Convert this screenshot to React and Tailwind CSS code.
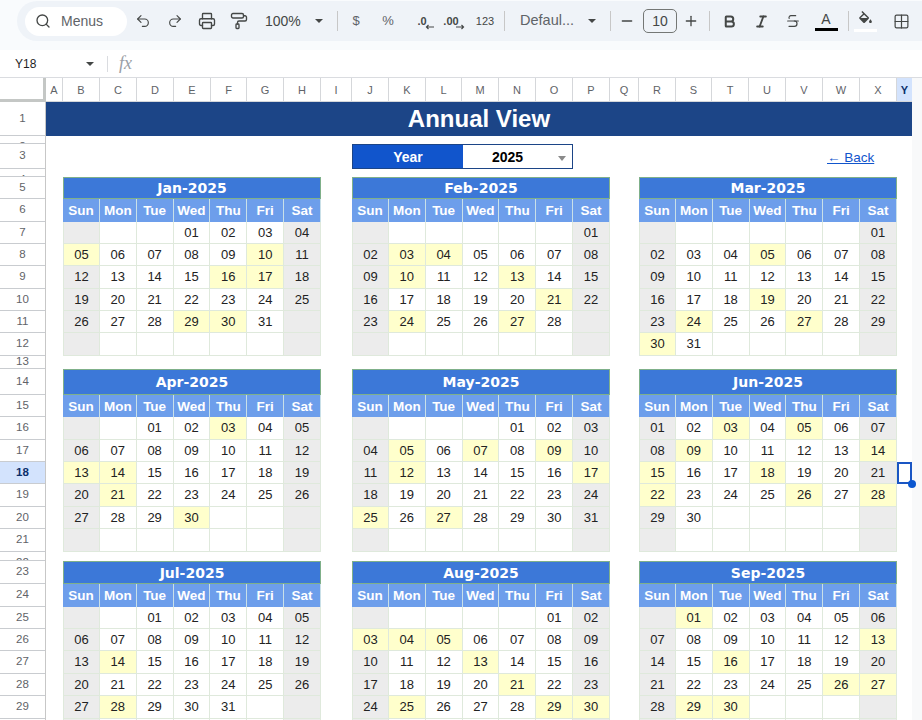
import React from "react";
import { Search, Undo2, Redo2, Printer, PaintRoller, Minus, Plus, Bold, Italic, Strikethrough, Grid2x2 } from "lucide-react";

/* --- data --- */
const COLS = [
  ["A", "w-[17px]"], ["B", "w-[37px]"], ["C", "w-[37px]"], ["D", "w-[37px]"], ["E", "w-[37px]"], ["F", "w-[36px]"],
  ["G", "w-[37px]"], ["H", "w-[37px]"], ["I", "w-[31px]"], ["J", "w-[37px]"], ["K", "w-[37px]"], ["L", "w-[36px]"],
  ["M", "w-[37px]"], ["N", "w-[37px]"], ["O", "w-[37px]"], ["P", "w-[37px]"], ["Q", "w-[29px]"], ["R", "w-[37px]"],
  ["S", "w-[36px]"], ["T", "w-[37px]"], ["U", "w-[37px]"], ["V", "w-[37px]"], ["W", "w-[37px]"], ["X", "w-[37px]"],
];

const ROWS = [
  [1, "h-[34px]"], [2, "h-[8px]"], [3, "h-[25px]"], [4, "h-[8px]"], [5, "h-[22px]"], [6, "h-[23px]"], [7, "h-[22px]"],
  [8, "h-[22px]"], [9, "h-[23px]"], [10, "h-[22px]"], [11, "h-[22px]"], [12, "h-[23px]"], [13, "h-[13px]"], [14, "h-[26px]"],
  [15, "h-[22px]"], [16, "h-[23px]"], [17, "h-[22px]"], [18, "h-[22px]"], [19, "h-[23px]"], [20, "h-[22px]"], [21, "h-[23px]"],
  [22, "h-[9px]"], [23, "h-[23px]"], [24, "h-[23px]"], [25, "h-[22px]"], [26, "h-[22px]"], [27, "h-[23px]"], [28, "h-[22px]"],
  [29, "h-[23px]"], [30, "h-[22px]"],
];

const DAYS = ["Sun", "Mon", "Tue", "Wed", "Thu", "Fri", "Sat"];

const BAND_1 = "grid-rows-[22px_23px_22px_22px_23px_22px_22px_23px]";
const BAND_2 = "grid-rows-[26px_22px_23px_22px_22px_23px_22px_23px]";
const BAND_3 = "grid-rows-[23px_23px_22px_22px_23px_22px_23px_22px]";

const BANDS = [
  {
    rows: BAND_1,
    gap: "mt-[8px]",
    months: [
      { name: "Jan-2025", start: 3, len: 31, marked: [5, 10, 16, 17, 29, 30] },
      { name: "Feb-2025", start: 6, len: 28, marked: [3, 4, 10, 13, 21, 24, 27] },
      { name: "Mar-2025", start: 6, len: 31, marked: [5, 19, 24, 27, 30] },
    ],
  },
  {
    rows: BAND_2,
    gap: "mt-[13px]",
    months: [
      { name: "Apr-2025", start: 2, len: 30, marked: [3, 13, 14, 21, 30] },
      { name: "May-2025", start: 4, len: 31, marked: [5, 7, 9, 12, 17, 25, 27] },
      { name: "Jun-2025", start: 0, len: 30, marked: [3, 5, 9, 14, 15, 18, 22, 26, 28] },
    ],
  },
  {
    rows: BAND_3,
    gap: "mt-[9px]",
    months: [
      { name: "Jul-2025", start: 2, len: 31, marked: [14, 28] },
      { name: "Aug-2025", start: 5, len: 31, marked: [3, 4, 5, 13, 21, 25, 29, 30] },
      { name: "Sep-2025", start: 1, len: 30, marked: [1, 13, 16, 26, 27, 29, 30] },
    ],
  },
];

/* --- toolbar bits --- */
function Caret({ className = "" }) {
  return <span className={`h-0 w-0 border-x-[4px] border-t-[4px] border-x-transparent border-t-[#444746] ${className}`} />;
}
function Sep({ className = "" }) {
  return <span className={`h-[20px] w-px shrink-0 bg-[#c7c7c7] ${className}`} />;
}
function Slot({ className = "", children }) {
  return <span className={`flex h-full shrink-0 items-center justify-center ${className}`}>{children}</span>;
}

function Toolbar() {
  return (
    <div className="h-[50px] shrink-0 bg-[#f9fbfd] pt-px pl-[17px]">
      <div className="flex h-[40px] items-center rounded-l-[20px] bg-[#eff3f8] pl-[8px] text-[#444746]">
        <div className="flex h-[29px] w-[102px] shrink-0 items-center rounded-full bg-white pl-[10px]">
          <Search size={16} strokeWidth={2} />
          <span className="ml-[10px] text-[14px] text-[#5f6368]">Menus</span>
        </div>
        <Slot className="w-[32px]"><Undo2 size={16} strokeWidth={1.7} /></Slot>
        <Slot className="w-[32px]"><Redo2 size={16} strokeWidth={1.7} /></Slot>
        <Slot className="w-[32px]"><Printer size={18} strokeWidth={1.8} /></Slot>
        <Slot className="w-[32px]"><PaintRoller size={18} strokeWidth={1.8} /></Slot>
        <Slot className="w-[56px] justify-start pl-[10px] text-[14px]">100%</Slot>
        <Slot className="w-[16px]"><Caret /></Slot>
        <Sep className="ml-[10px]" />
        <Slot className="ml-[8px] w-[20px] text-[13px] text-[#5f6368]">$</Slot>
        <Slot className="ml-[6px] w-[32px] text-[13px] text-[#5f6368]">%</Slot>
        <Slot className="ml-[2px] w-[32px]">
          <span className="relative text-[11px] font-bold">
            .0
            <svg className="absolute -right-[8px] top-[11px]" width="10" height="6" viewBox="0 0 10 6" fill="none" stroke="#444746" strokeWidth="1.2"><path d="M9 3H1.5M3.5 1 1.5 3l2 2" /></svg>
          </span>
        </Slot>
        <Slot className="w-[26px]">
          <span className="relative text-[11px] font-bold">
            .00
            <svg className="absolute -right-[6px] top-[11px]" width="10" height="6" viewBox="0 0 10 6" fill="none" stroke="#444746" strokeWidth="1.2"><path d="M1 3h7.5M6.5 1l2 2-2 2" /></svg>
          </span>
        </Slot>
        <Slot className="ml-[2px] w-[38px] text-[11px]">123</Slot>
        <Sep />
        <Slot className="ml-[15px] w-[54px] justify-start text-[14.5px] text-[#5f6368]">Defaul...</Slot>
        <Slot className="ml-[10px] w-[16px]"><Caret /></Slot>
        <Sep className="ml-[10px]" />
        <Slot className="ml-[6px] w-[20px]"><Minus size={16} strokeWidth={2} /></Slot>
        <div className="ml-[6px] flex h-[24px] w-[34px] shrink-0 items-center justify-center rounded-[5px] border border-[#747775] text-[14px]">10</div>
        <Slot className="ml-[4px] w-[20px]"><Plus size={16} strokeWidth={2} /></Slot>
        <Sep className="ml-[8px]" />
        <Slot className="ml-[9px] w-[20px]"><Bold size={15} strokeWidth={3.2} /></Slot>
        <Slot className="ml-[12px] w-[20px]"><Italic size={15} strokeWidth={3} /></Slot>
        <Slot className="ml-[12px] w-[20px]"><Strikethrough size={16} strokeWidth={1.8} /></Slot>
        <Slot className="ml-[11px] w-[24px] flex-col">
          <span className="text-[14px] leading-[15px]">A</span>
          <span className="mt-[1px] h-[3px] w-[23px] bg-black" />
        </Slot>
        <Sep className="ml-[10px]" />
        <Slot className="ml-[5px] w-[22px] flex-col">
          <svg width="17" height="17" viewBox="0 0 24 24" fill="#444746">
            <path d="M16.56 8.94L7.62 0 6.21 1.41l2.38 2.38-5.15 5.15c-.59.59-.59 1.54 0 2.12l5.5 5.5c.29.29.68.44 1.06.44s.77-.15 1.06-.44l5.5-5.5c.59-.58.59-1.53 0-2.12zM5.21 10L10 5.21 14.79 10H5.21zM19 11.5s-2 2.17-2 3.5c0 1.1.9 2 2 2s2-.9 2-2c0-1.33-2-3.5-2-3.5z" />
          </svg>
          <span className="mt-[1px] h-[3px] w-[23px] bg-white" />
        </Slot>
        <Slot className="ml-[16px] w-[18px]"><Grid2x2 size={17} strokeWidth={1.7} /></Slot>
      </div>
    </div>
  );
}

function FormulaBar() {
  return (
    <div className="flex h-[27px] shrink-0 items-center bg-white">
      <span className="ml-[15px] w-[71px] text-[12px] text-[#1f1f1f]">Y18</span>
      <Caret />
      <span className="ml-[13px] h-[16px] w-px bg-[#dadce0]" />
      <span className="ml-[11px] font-['Liberation_Serif',serif] text-[18px] italic text-[#9aa0a6]">fx</span>
    </div>
  );
}

function ColumnHeader() {
  return (
    <div className="flex h-[25px] shrink-0 border-t border-[#dadce0] bg-white text-[11px] text-[#5f6368]">
      <div className="h-full w-[46px] shrink-0 border-r-[3px] border-b-[3px] border-[#c4c7c5]" />
      {COLS.map(([c, w]) => (
        <div key={c} className={`flex h-full shrink-0 items-center justify-center border-r border-b border-[#d5d7da] pt-px ${w}`}>
          {c}
        </div>
      ))}
      <div className="flex h-full w-[15px] shrink-0 items-center justify-center border-b border-[#d5d7da] bg-[#d3e3fd] pt-px font-bold text-[#0b2f6b]">Y</div>
      <div className="h-full flex-1 bg-[#f8f9fa]" />
    </div>
  );
}

function RowHeader() {
  return (
    <div className="w-[46px] shrink-0 border-r border-[#c7c7c7] bg-white text-[11.5px] text-[#5f6368]">
      {ROWS.map(([n, h]) => (
        <div
          key={n}
          className={`flex justify-center overflow-hidden border-b border-[#c9ccd0] ${h} ${
            n === 18 ? "bg-[#d3e3fd] font-bold text-[#0b2f6b]" : ""
          } ${[2, 4, 22].includes(n) ? "items-start pt-[2px]" : "items-center"}`}
        >
          {n}
        </div>
      ))}
    </div>
  );
}

/* --- calendar --- */
function Month({ m, rows, className = "" }) {
  const cells = Array.from({ length: 42 }, (_, i) => {
    const d = i - m.start + 1;
    return d >= 1 && d <= m.len ? d : null;
  });
  return (
    <div className={`grid w-[258px] shrink-0 grid-cols-7 ${rows} ${className}`}>
      <div className="col-span-7 flex items-center justify-center border border-[#7fb08a] bg-[#3c78d8] pt-px font-['DejaVu_Sans',sans-serif] text-[14px] font-bold text-white">
        {m.name}
      </div>
      {DAYS.map((d) => (
        <div key={d} className="flex items-center justify-center border-r border-[#c9e0e8] bg-[#6d9eeb] pt-[2px] text-[13.5px] font-bold text-white first:border-l">
          {d}
        </div>
      ))}
      {cells.map((d, i) => {
        const weekend = i % 7 === 0 || i % 7 === 6;
        const marked = d && m.marked.includes(d);
        const bg = marked ? "bg-[#ffffcc]" : weekend ? "bg-[#ececec]" : "bg-white";
        return (
          <div
            key={i}
            className={`flex items-center justify-center border-r border-b border-[#dfe9dc] text-[13px] text-[#222] ${bg} ${i % 7 === 0 ? "border-l" : ""}`}
          >
            {d ? String(d).padStart(2, "0") : ""}
          </div>
        );
      })}
    </div>
  );
}

export default function App() {
  return (
    <div className="flex h-[720px] w-[922px] flex-col overflow-hidden bg-white font-['Liberation_Sans',Arial,sans-serif]">
      <Toolbar />
      <FormulaBar />
      <ColumnHeader />

      <div className="flex min-h-0 flex-1">
        <RowHeader />

        <div className="relative w-[866px] shrink-0 bg-white">
          <div className="flex h-[34px] items-center justify-center bg-[#1c4587] text-[24px] font-bold text-white">
            Annual View
          </div>

          {/* Year picker + back link */}
          <div className="mt-[8px] flex h-[25px] items-center pl-[306px]">
            <div className="flex h-full w-[221px] border border-[#1c4587] pt-px text-[14px] font-bold">
              <div className="-mt-px flex w-[110px] items-center justify-center bg-[#1155cc] pt-px text-white">Year</div>
              <div className="relative flex flex-1 items-center justify-center pr-[20px] text-black">
                2025
                <span className="absolute right-[6px] top-[10px] h-0 w-0 border-x-[4px] border-t-[5px] border-x-transparent border-t-[#8a8a8a]" />
              </div>
            </div>
            <a href="#" className="ml-[254px] pt-[3px] text-[13.5px] font-normal text-[#1155cc] underline">← Back</a>
          </div>

          {BANDS.map((b) => (
            <div key={b.months[0].name} className={`flex pl-[17px] ${b.gap}`}>
              <Month m={b.months[0]} rows={b.rows} />
              <Month m={b.months[1]} rows={b.rows} className="ml-[31px]" />
              <Month m={b.months[2]} rows={b.rows} className="ml-[29px]" />
            </div>
          ))}

          {/* selected cell */}
          <div className="absolute left-[851px] top-[360px] h-[22px] w-[15px] border-2 border-[#1a56c4]" />
          <div className="absolute left-[862px] top-[378px] h-[8px] w-[8px] rounded-full bg-[#0b57d0]" />
        </div>

        <div className="flex-1 bg-[#f8f9fa]" />
      </div>
    </div>
  );
}
